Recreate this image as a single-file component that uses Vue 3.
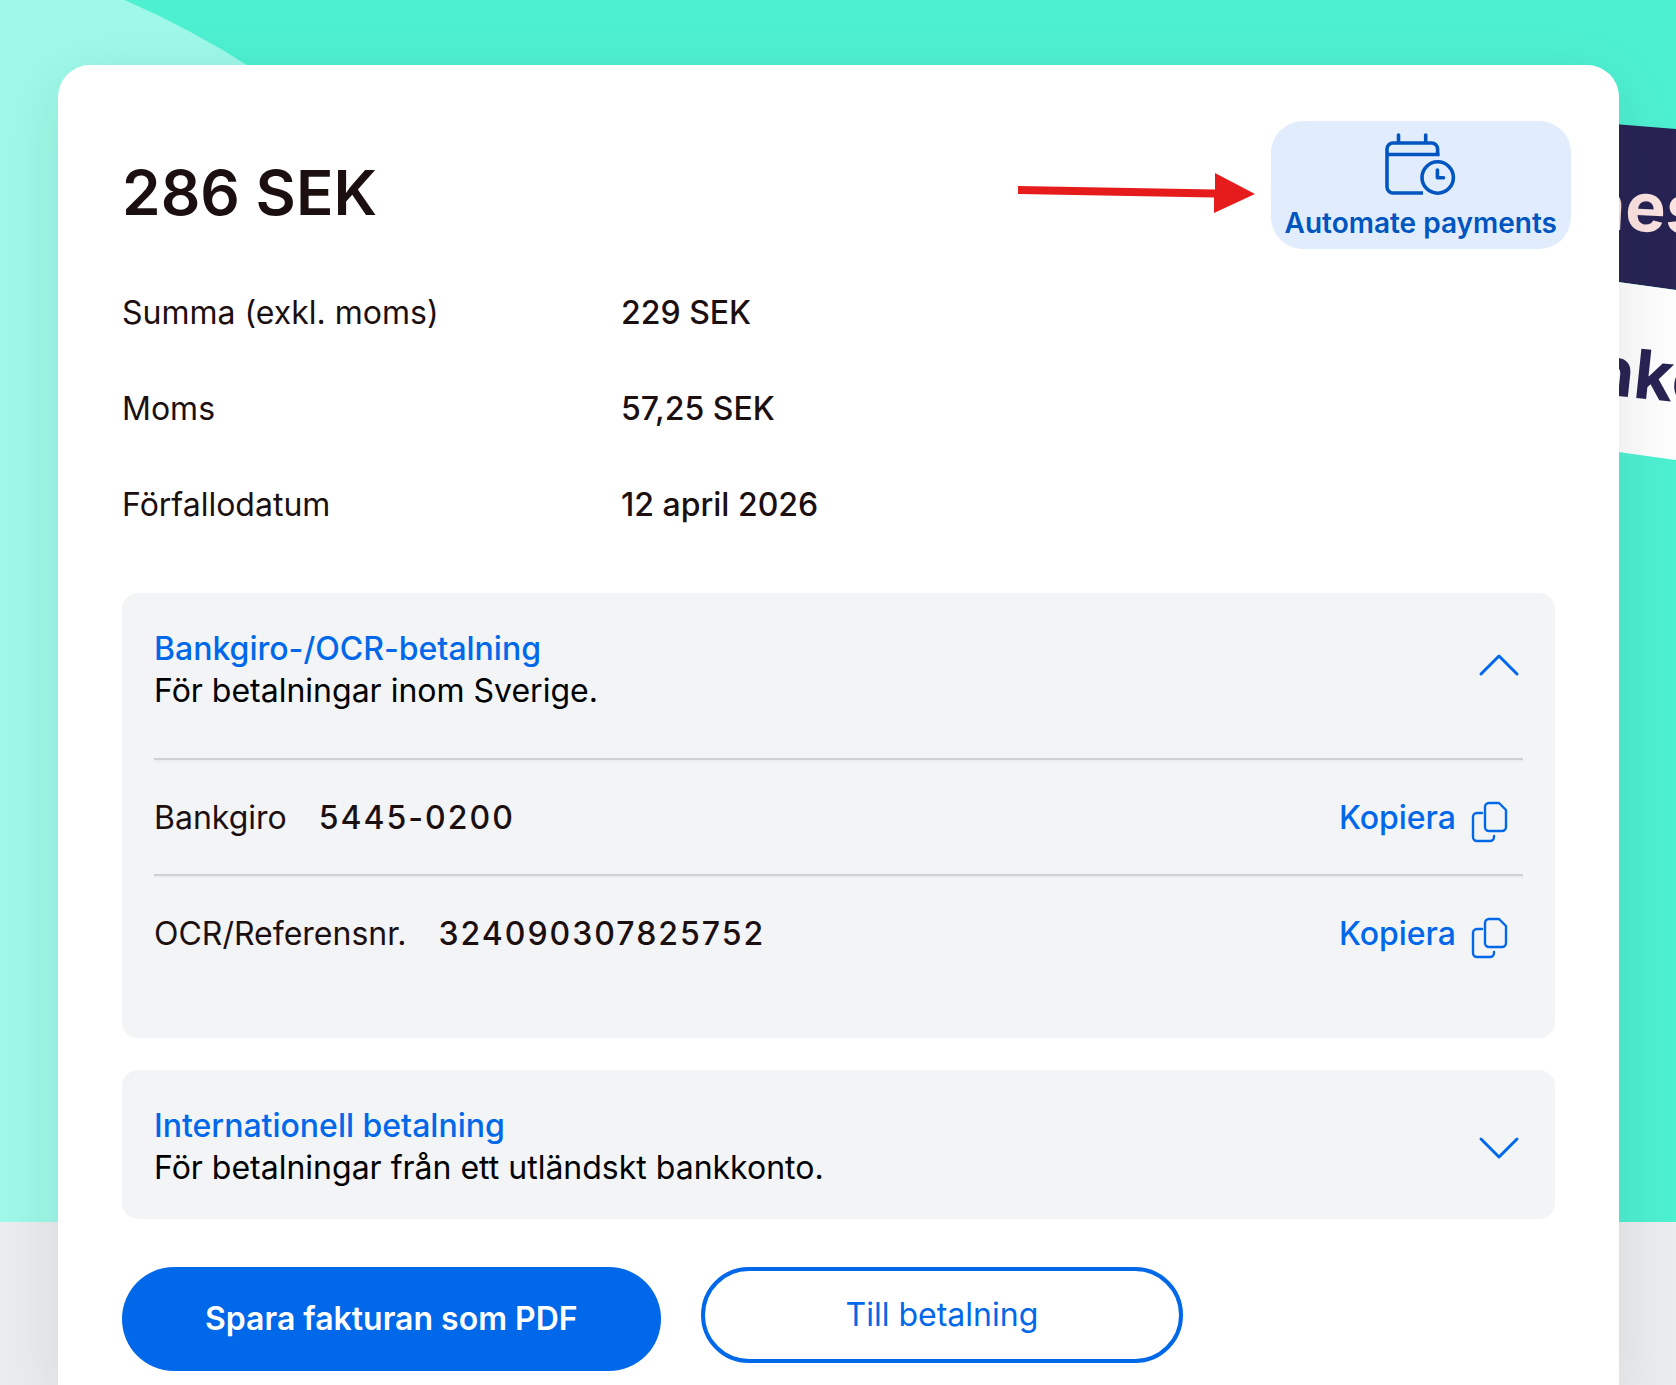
<script setup>
import { ref } from "vue";

// invoice summary rows
const rows = [
  { label: "Summa (exkl. moms)", value: "229 SEK" },
  { label: "Moms", value: "57,25 SEK" },
  { label: "Förfallodatum", value: "12 april 2026" },
];

// payment details that can be copied
const details = [
  { label: "Bankgiro", value: "5445-0200" },
  { label: "OCR/Referensnr.", value: "324090307825752" },
];

// which panels are open
const domesticOpen = ref(true);
const internationalOpen = ref(false);

// copy value to clipboard
const copyValue = async (value) => {
  try {
    await navigator.clipboard.writeText(value);
  } catch (error) {
    console.error("Failed to copy:", error);
  }
};
</script>

<template>
  <div class="page">
    <!-- decorative background behind the card -->
    <div class="hero" aria-hidden="true">
      <div class="circle"></div>
      <svg class="banner" width="160" height="500" viewBox="0 0 160 500">
        <path d="M0 116 L160 129 L160 290 L0 268 Z" fill="#272454" />
        <path d="M0 268 L160 290 L160 460 L0 438 Z" fill="#fdfdfd" />
        <text x="66" y="228" class="banner-text light" transform="rotate(3 66 228)">nes</text>
        <text x="74" y="393" class="banner-text dark" transform="rotate(6 74 393)">nke</text>
      </svg>
    </div>

    <main class="card">
      <header class="card-header">
        <h1>286 SEK</h1>
        <svg class="arrow" width="237" height="40" viewBox="0 0 237 40" aria-hidden="true">
          <path d="M0 13 L197 16.500 L197 0 L237 21 L196 40 L196 24.500 L0 21 Z" fill="#e61c1c" />
        </svg>
        <button class="automate" type="button">
          <svg width="72" height="64" viewBox="0 0 72 64" fill="none" stroke="#0055c0" stroke-width="3.600" aria-hidden="true">
            <path d="M52.600 23 V16 a6 6 0 0 0 -6 -6 H8 a6 6 0 0 0 -6 6 V54 a6 6 0 0 0 6 6 H38" />
            <path d="M2 21.500 H54.400" />
            <path d="M13.500 9 V2 M40.700 9 V2" stroke-linecap="round" />
            <circle cx="52.700" cy="44.500" r="15.700" />
            <path d="M52.400 37 V44.800 H58.500" stroke-linecap="round" stroke-linejoin="round" />
          </svg>
          <span>Automate payments</span>
        </button>
      </header>

      <dl class="summary">
        <div v-for="row in rows" :key="row.label" class="summary-row">
          <dt>{{ row.label }}</dt>
          <dd>{{ row.value }}</dd>
        </div>
      </dl>

      <div class="panels">
        <section class="panel">
          <button class="panel-toggle" type="button" :aria-expanded="domesticOpen" @click="domesticOpen = !domesticOpen">
            <span class="panel-text">
              <span class="panel-title">Bankgiro-/OCR-betalning</span>
              <span>För betalningar inom Sverige.</span>
            </span>
            <svg class="chevron" :class="{ open: domesticOpen }" width="48" height="48" viewBox="0 0 48 48">
              <path d="M6 18 L24 36 L42 18" />
            </svg>
          </button>
          <!-- copyable numbers -->
          <div v-if="domesticOpen" class="panel-body">
            <template v-for="item in details" :key="item.label">
              <hr />
              <div class="detail">
                <span>{{ item.label }}</span>
                <span class="number">{{ item.value }}</span>
                <button class="copy" type="button" @click="copyValue(item.value)">
                  Kopiera
                  <svg width="36" height="40" viewBox="0 0 36 40" aria-hidden="true">
                    <path d="M17 1 H27 L34 8 V25 a4 4 0 0 1 -4 4 H17 a4 4 0 0 1 -4 -4 V5 a4 4 0 0 1 4 -4 Z" />
                    <path d="M10 11 H5 a4 4 0 0 0 -4 4 V35 a4 4 0 0 0 4 4 H18 a4 4 0 0 0 4 -4 V34" />
                  </svg>
                </button>
              </div>
            </template>
          </div>
        </section>

        <section class="panel">
          <button class="panel-toggle" type="button" :aria-expanded="internationalOpen" @click="internationalOpen = !internationalOpen">
            <span class="panel-text">
              <span class="panel-title">Internationell betalning</span>
              <span>För betalningar från ett utländskt bankkonto.</span>
            </span>
            <svg class="chevron" :class="{ open: internationalOpen }" width="48" height="48" viewBox="0 0 48 48">
              <path d="M6 18 L24 36 L42 18" />
            </svg>
          </button>
        </section>
      </div>

      <div class="actions">
        <button class="primary" type="button">Spara fakturan som PDF</button>
        <button class="secondary" type="button">Till betalning</button>
      </div>
    </main>
  </div>
</template>

<style>
body {
  margin: 0;
  background: #ebecee;
}
</style>

<style scoped>
.page {
  position: relative;
  display: flex;
  flex-direction: column;
  box-sizing: border-box;
  min-height: 100vh;
  padding: 65px 57px 0 58px;
  overflow: hidden;
  font-family: Inter, "Liberation Sans", sans-serif;
  font-size: 32px;
  line-height: 42px;
  color: #1c0f10;
}

button {
  border: 0;
  padding: 0;
  background: none;
  font: inherit;
  color: inherit;
  cursor: pointer;
}

/* background */
.hero {
  position: absolute;
  top: 0;
  left: 0;
  width: 100%;
  height: 1222px;
  overflow: hidden;
  background: #4ef0d2;
}

.circle {
  position: absolute;
  top: -75px;
  left: -1135px;
  width: 1800px;
  height: 1800px;
  border-radius: 50%;
  background: #9ef9e8;
}

.banner {
  position: absolute;
  top: 0;
  right: 0;
}

.banner-text {
  font-size: 68px;
  font-weight: 700;
}

.light {
  fill: #fbe3e1;
}

.dark {
  fill: #272454;
}

/* card */
.card {
  position: relative;
  flex: 1;
  padding: 56px 64px 14px;
  border-radius: 32px 32px 0 0;
  background: #fff;
  box-shadow: 0 16px 64px rgba(28, 28, 32, 0.1);
}

.card-header {
  display: flex;
  align-items: center;
  gap: 16px;
  margin-right: -16px;
}

h1 {
  margin: 0 auto 0 0;
  padding-top: 16px;
  font-size: 62px;
  line-height: 80px;
  font-weight: 600;
}

.arrow {
  padding-top: 16px;
}

.automate {
  display: flex;
  flex-direction: column;
  align-items: center;
  gap: 8px;
  padding: 12px 14px 8px;
  border-radius: 32px;
  background: #e1edfc;
  color: #0055c0;
  font-size: 28px;
  line-height: 36px;
  font-weight: 600;
}

/* summary */
.summary {
  margin: 16px 0 40px;
}

.summary-row {
  display: grid;
  grid-template-columns: 499px 1fr;
  align-items: center;
  height: 96px;
}

dd {
  margin: 0;
  font-weight: 500;
}

/* panels */
.panels {
  display: grid;
  gap: 32px;
}

.panel {
  border-radius: 16px;
  background: #f2f4f6;
}

.panel-toggle {
  display: flex;
  align-items: center;
  justify-content: space-between;
  width: 100%;
  padding: 35px 32px 30px;
  text-align: left;
  color: #000;
}

.panel-text {
  display: grid;
}

.panel-title {
  color: #0068e9;
  font-weight: 500;
}

.chevron {
  margin-bottom: 4px;
  fill: none;
  stroke: #0068e9;
  stroke-width: 3;
  stroke-linecap: round;
  stroke-linejoin: round;
}

.open {
  transform: rotate(180deg);
}

.panel-body {
  padding: 16px 32px 48px;
}

hr {
  margin: 0;
  border: 0;
  border-top: 2px solid #cdd1d6;
  border-bottom: 2px solid #ededee;
}

.detail {
  display: flex;
  align-items: center;
  gap: 32px;
  height: 112px;
}

.number {
  font-weight: 500;
  letter-spacing: 2px;
}

.copy {
  display: flex;
  align-items: center;
  gap: 16px;
  margin-left: auto;
  padding-right: 15px;
  color: #0068e9;
  font-weight: 500;
}

.copy svg {
  margin-top: 8px;
  fill: none;
  stroke: #0068e9;
  stroke-width: 2.4;
  stroke-linecap: round;
  stroke-linejoin: round;
  overflow: visible;
}

/* buttons */
.actions {
  display: flex;
  align-items: flex-start;
  gap: 40px;
  margin-top: 48px;
}

.primary {
  height: 104px;
  padding: 0 83px;
  border-radius: 52px;
  background: #0068e9;
  color: #fff;
  font-weight: 600;
}

.secondary {
  height: 96px;
  padding: 0 141px;
  border: 4px solid #0068e9;
  border-radius: 48px;
  color: #0068e9;
}
</style>
